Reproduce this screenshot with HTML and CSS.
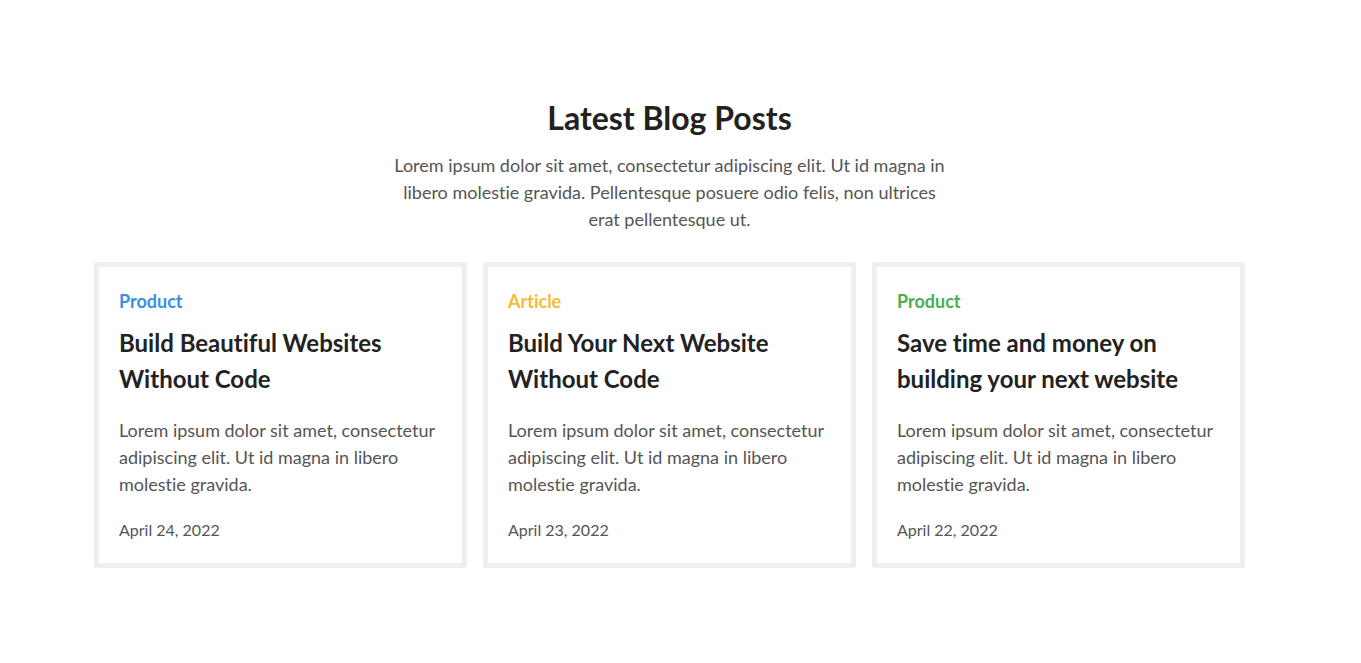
FILE: index.html
```html
<!DOCTYPE html>
<html lang="en">
<head>
<meta charset="utf-8">
<title>Latest Blog Posts</title>
<link rel="stylesheet" href="styles.css">
</head>
<body>
<section class="blog">
  <header class="blog-head">
    <h1 class="blog-title">Latest Blog Posts</h1>
    <p class="blog-intro">Lorem ipsum dolor sit amet, consectetur adipiscing elit. Ut id magna in libero molestie gravida. Pellentesque posuere odio felis, non ultrices erat pellentesque ut.</p>
  </header>
  <div class="cards">
    <article class="card">
      <div class="cat cat-blue">Product</div>
      <h2 class="card-title">Build Beautiful Websites Without Code</h2>
      <p class="card-text">Lorem ipsum dolor sit amet, consectetur adipiscing elit. Ut id magna in libero molestie gravida.</p>
      <div class="card-date">April 24, 2022</div>
    </article>
    <article class="card">
      <div class="cat cat-yellow">Article</div>
      <h2 class="card-title">Build Your Next Website Without Code</h2>
      <p class="card-text">Lorem ipsum dolor sit amet, consectetur adipiscing elit. Ut id magna in libero molestie gravida.</p>
      <div class="card-date">April 23, 2022</div>
    </article>
    <article class="card">
      <div class="cat cat-green">Product</div>
      <h2 class="card-title">Save time and money on building your next website</h2>
      <p class="card-text">Lorem ipsum dolor sit amet, consectetur adipiscing elit. Ut id magna in libero molestie gravida.</p>
      <div class="card-date">April 22, 2022</div>
    </article>
  </div>
</section>
</body>
</html>
```
FILE: styles.css
```css
* { box-sizing: border-box; }
html, body { margin: 0; padding: 0; background: #fff; }
body {
  font-family: Lato, "Open Sans", sans-serif;
  color: #222;
  font-variant-ligatures: none;
}
.blog {
  width: 1151px;
  margin-left: 94px;
  padding-top: 98px;
}
.blog-head {
  display: flex;
  flex-direction: column;
  align-items: center;
  text-align: center;
}
.blog-title {
  margin: 0;
  font-size: 32px;
  line-height: 40px;
  font-weight: 700;
  color: #222;
}
.blog-intro {
  margin: 14px 0 0;
  width: 560px;
  font-size: 18px;
  line-height: 27px;
  color: #555;
}
.cards {
  margin-top: 29px;
  display: grid;
  grid-template-columns: repeat(3, 373px);
  gap: 16px;
}
.card {
  border: 5px solid #eeeeee;
  border-radius: 3px;
  padding: 21px 20px 21px;
}
.cat {
  font-size: 18px;
  line-height: 27px;
  font-weight: 700;
}
.cat-blue { color: #3b8fe3; }
.cat-yellow { color: #f6bb33; }
.cat-green { color: #4caf50; }
.card-title {
  margin: 10px 0 0;
  font-size: 24px;
  line-height: 36px;
  font-weight: 700;
  color: #222;
}
.card-text {
  margin: 20px 0 0;
  font-size: 18px;
  line-height: 27px;
  color: #555;
}
.card-date {
  margin-top: 20px;
  font-size: 16px;
  line-height: 24px;
  color: #555;
}
```
